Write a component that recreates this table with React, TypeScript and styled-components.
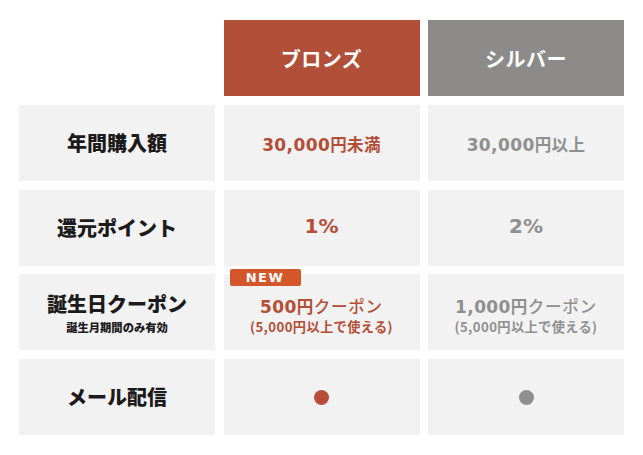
import React from 'react';
import styled, { createGlobalStyle } from 'styled-components';

const GlobalStyle = createGlobalStyle`
  body {
    margin: 0;
    background: #ffffff;
    font-family: 'DejaVu Sans', 'Noto Sans CJK JP', sans-serif;
  }
`;

const colors = {
  bronze: '#b24f38',
  silver: '#8d8b8a',
  bronzeText: '#b44e37',
  silverText: '#8f8f8f',
  cell: '#f2f2f2',
  label: '#1c1a1a',
  badge: '#d4572b',
};

type Tier = 'bronze' | 'silver';

const Page = styled.div`
  padding: 20px 19px;
`;

const Table = styled.div`
  display: grid;
  grid-template-columns: repeat(3, 196px);
  grid-auto-rows: 76px;
  column-gap: 8.5px;
  row-gap: 8.75px;
`;

const Blank = styled.div``;

const Head = styled.div<{ tier: Tier }>`
  display: flex;
  align-items: center;
  justify-content: center;
  background: ${({ tier }) => colors[tier]};
  color: #ffffff;
  font-family: 'Noto Sans CJK JP', sans-serif;
  font-weight: 700;
  font-size: 20px;
  letter-spacing: 0.5px;
`;

const Label = styled.div`
  display: flex;
  flex-direction: column;
  align-items: center;
  justify-content: center;
  background: ${colors.cell};
  color: ${colors.label};
  font-family: 'Noto Sans CJK JP', sans-serif;
  font-weight: 900;
  font-size: 20px;
  line-height: 26px;
`;

const Note = styled.span`
  font-size: 11.3px;
  line-height: 14px;
  margin-top: 3px;
`;

const Cell = styled.div<{ tier: Tier }>`
  position: relative;
  display: flex;
  flex-direction: column;
  align-items: center;
  justify-content: center;
  background: ${colors.cell};
  color: ${({ tier }) => (tier === 'bronze' ? colors.bronzeText : colors.silverText)};
  font-weight: 700;
`;

const Amount = styled.span`
  font-size: 17px;
  letter-spacing: 0.4px;
  line-height: 22px;
  margin-top: 3px;
`;

const Kanji = styled.span`
  font-family: 'Noto Sans CJK JP', sans-serif;
  font-weight: 700;
  letter-spacing: 0.4px;
  font-size: 16.5px;
`;

const Percent = styled.span`
  font-size: 20px;
  margin-top: -3px;
`;

const Coupon = styled.span`
  font-size: 17px;
  letter-spacing: 0.4px;
  line-height: 22px;
  margin-top: 6px;
`;

const CouponKana = styled.span`
  font-family: 'Noto Sans CJK JP', sans-serif;
  font-weight: 500;
  font-size: 16.5px;
  letter-spacing: 0.8px;
`;

const Condition = styled.span`
  font-size: 13.2px;
  line-height: 18px;
  letter-spacing: 0.4px;
  font-family: 'Noto Sans CJK JP', sans-serif;
  font-weight: 700;
`;

const Badge = styled.span`
  position: absolute;
  top: -5px;
  left: 6px;
  width: 71px;
  height: 17px;
  display: flex;
  align-items: center;
  justify-content: center;
  background: ${colors.badge};
  border-radius: 2px;
  color: #ffffff;
  font-family: 'DejaVu Sans', sans-serif;
  font-weight: 700;
  font-size: 13px;
  letter-spacing: 1.4px;
`;

const Dot = styled.span<{ tier: Tier }>`
  width: 15px;
  height: 15px;
  border-radius: 50%;
  background: ${({ tier }) => (tier === 'bronze' ? '#b84d39' : '#8f8f8f')};
`;

const tiers: { tier: Tier; name: string; amount: string; amountKanji: string; rate: string; coupon: string }[] = [
  { tier: 'bronze', name: 'ブロンズ', amount: '30,000', amountKanji: '円未満', rate: '1%', coupon: '500' },
  { tier: 'silver', name: 'シルバー', amount: '30,000', amountKanji: '円以上', rate: '2%', coupon: '1,000' },
];

export default function App() {
  return (
    <Page>
      <GlobalStyle />
      <Table>
        <Blank />
        {tiers.map((t) => (
          <Head key={t.tier} tier={t.tier}>
            {t.name}
          </Head>
        ))}

        <Label>年間購入額</Label>
        {tiers.map((t) => (
          <Cell key={t.tier} tier={t.tier}>
            <Amount>
              {t.amount}
              <Kanji>{t.amountKanji}</Kanji>
            </Amount>
          </Cell>
        ))}

        <Label>還元ポイント</Label>
        {tiers.map((t) => (
          <Cell key={t.tier} tier={t.tier}>
            <Percent>{t.rate}</Percent>
          </Cell>
        ))}

        <Label>
          誕生日クーポン
          <Note>誕生月期間のみ有効</Note>
        </Label>
        {tiers.map((t) => (
          <Cell key={t.tier} tier={t.tier}>
            {t.tier === 'bronze' && <Badge>NEW</Badge>}
            <Coupon>
              {t.coupon}
              <Kanji>円</Kanji>
              <CouponKana>クーポン</CouponKana>
            </Coupon>
            <Condition>(5,000円以上で使える)</Condition>
          </Cell>
        ))}

        <Label>メール配信</Label>
        {tiers.map((t) => (
          <Cell key={t.tier} tier={t.tier}>
            <Dot tier={t.tier} />
          </Cell>
        ))}
      </Table>
    </Page>
  );
}
